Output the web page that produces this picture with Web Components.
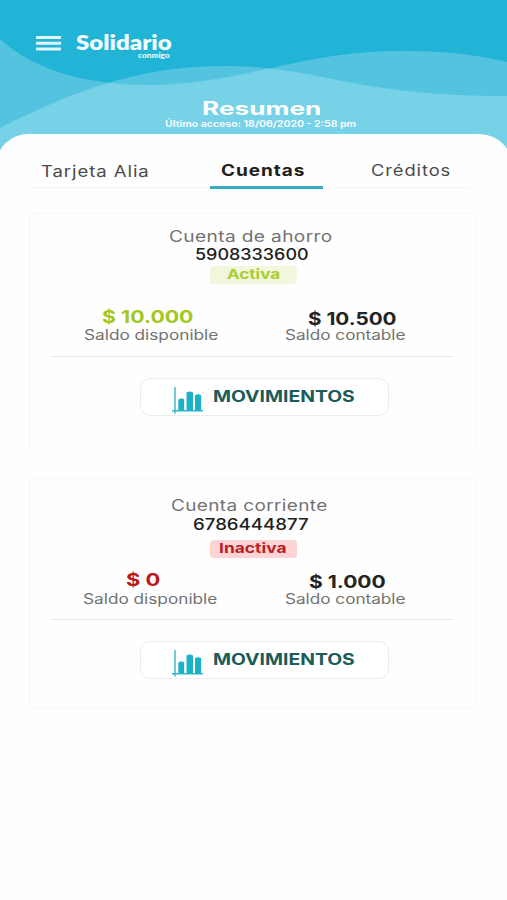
<!DOCTYPE html>
<html lang="es">
<head>
<meta charset="utf-8">
<title>Resumen</title>
<style>
html,body{margin:0;height:100%;background:#fefefe;overflow:hidden}
body{font-family:Inter,"Liberation Sans",sans-serif}
</style>
</head>
<body>
<summary-screen></summary-screen>
<script>
// One line of text set to a given width; the box is exactly the capital height.
class FitText extends HTMLElement{
  connectedCallback(){
    if(this.shadowRoot)return;
    const a=(n,d)=>this.getAttribute(n)||d;
    const w=+a('w',100),size=+a('size',16);
    const r=this.attachShadow({mode:'open'});
    r.innerHTML=`<style>
      :host{display:block;flex:none;width:${w}px;height:${(size*.727).toFixed(2)}px;margin-left:${a('indent',0)}px;margin-top:${a('gap',0)}px;color:${a('color','#727272')};font-size:${size}px;font-weight:${a('weight',400)};line-height:${(size*.727).toFixed(2)}px;letter-spacing:${a('track',0)}px}
      span{display:inline-block;white-space:nowrap;transform-origin:0 50%;vertical-align:top}
    </style><span><slot></slot></span>`;
    const s=r.querySelector('span');
    s.style.transform=`translateY(${a('drop',.6)}px) scaleX(${w/s.offsetWidth})`;
  }
}

class MenuIcon extends HTMLElement{
  constructor(){super();this.attachShadow({mode:'open'}).innerHTML=`<style>:host{display:block;width:25px;height:15px}svg{display:block}</style>
  <svg width="25" height="15" fill="#dff6fb"><path d="M0 0h25v3H0zM0 5.8h25v2.9H0zM0 11.6h25v3H0z"/></svg>`}
}

class BrandLogo extends HTMLElement{
  constructor(){super();this.attachShadow({mode:'open'}).innerHTML=`<style>
  :host{display:flex;flex-direction:column;width:96px;font-family:Lato,sans-serif}</style>
  <fit-text w="96" size="20.3" weight="800" drop=".2" color="#effbfd">Solidario</fit-text>
  <fit-text w="32" size="7" weight="900" indent="62" gap="1.6" color="#effbfd">conmigo</fit-text>`}
}

class WaveHeader extends HTMLElement{
  constructor(){super();this.attachShadow({mode:'open'}).innerHTML=`<style>
  :host{display:grid;height:165px;background:#22b4d7}
  svg,.c{grid-area:1/1}
  svg{display:block}
  .c{display:flex;flex-direction:column}
  .bar{display:flex;gap:15.5px;padding:36px 0 0 35.5px;height:66px;box-sizing:border-box;align-items:flex-start}
  brand-logo{margin-top:-.6px}
  </style>
  <svg width="507" height="165" viewBox="0 0 507 165">
    <path fill="#54c3e0" d="M0 39C36 72 90 85 150 85C240 85 300 51 400 51C440 51 475 54 507 62V165H0Z"/>
    <path fill="#54c3e0" d="M0 128C75 90 140 66 225 66C320 66 350 96 507 96V165H0Z"/>
    <clipPath id="k"><path d="M0 39C36 72 90 85 150 85C240 85 300 51 400 51C440 51 475 54 507 62V165H0Z"/></clipPath>
    <path clip-path="url(#k)" fill="#77d1e7" d="M0 128C75 90 140 66 225 66C320 66 350 96 507 96V165H0Z"/>
  </svg>
  <div class="c"><div class="bar"><menu-icon></menu-icon><brand-logo></brand-logo></div>
  <fit-text w="119" size="18.5" weight="750" indent="202" gap="36" drop=".2" color="#fff">Resumen</fit-text>
  <fit-text w="191" size="8.6" weight="650" indent="165" gap="6" drop=".2" color="#f4fcfe">Último acceso: 18/06/2020 - 2:58 pm</fit-text></div>`}
}

class TabBar extends HTMLElement{
  constructor(){super();this.attachShadow({mode:'open'}).innerHTML=`<style>
  :host{display:grid;grid-template-columns:178px 113px 12px 135px;margin-left:32px;height:55px}
  div{box-sizing:border-box;padding-top:30px;border-bottom:1px solid #f3f4f4;height:54px}
  .on{height:55px;border-bottom:3px solid #39abc0}
  .gap{border:0}
  </style>
  <div><fit-text w="109" size="15.8" indent="8.5" gap=".6" track=".8" color="#4b4b4b">Tarjeta Alia</fit-text></div>
  <div class="on"><fit-text w="84" size="15.8" weight="700" indent="10.5" track=".8" color="#202020">Cuentas</fit-text></div>
  <div class="gap"></div>
  <div><fit-text w="80" size="15.8" indent="36" track=".8" color="#4b4b4b">Créditos</fit-text></div>`}
}

class StatusBadge extends HTMLElement{
  constructor(){super();this.attachShadow({mode:'open'}).innerHTML=`<style>
  :host{display:block;box-sizing:border-box;width:87.5px;height:18px;padding-top:3.5px;border-radius:4px;margin-left:180px;background:#f0f7dc}
  :host([off]){background:#fcd4d6}
  </style><slot></slot>`}
}

class MovesButton extends HTMLElement{
  constructor(){super();this.attachShadow({mode:'open'}).innerHTML=`<style>
  :host{display:flex;box-sizing:border-box;width:249px;height:38px;border:1.5px solid #ececec;border-radius:10px;margin-left:110px;padding:8px 0 0 30px;background:#fff}
  svg{display:block;flex:none}
  </style>
  <svg width="33" height="28" viewBox="0 0 33 28">
    <path d="M4 0V26.5M1 23.7H32" stroke="#36b5c5" stroke-width="1.4" fill="none"/>
    <path d="M7.3 23.7V13Q7.3 11.6 10.2 11.6Q13.2 11.6 13.2 13V23.7ZM15.5 23.7V6Q15.5 4.4 18.7 4.4Q22 4.4 22 6V23.7ZM24 23.7V8.8Q24 7.2 27.1 7.2Q30.2 7.2 30.2 8.8V23.7Z" fill="#1bb1c7"/>
  </svg>
  <fit-text w="141.5" size="15.3" weight="700" indent="9" gap="3.6" drop=".1" color="#1b5b58">MOVIMIENTOS</fit-text>`}
}

class AccountCard extends HTMLElement{
  constructor(){super();this.attachShadow({mode:'open'}).innerHTML=`<style>
  :host{display:flex;flex-direction:column;align-items:flex-start;box-sizing:border-box;width:447px;border:1px solid #f6f6f6;border-radius:5px;margin-left:28.5px}
  :host([open]){border-bottom:0;border-radius:5px 5px 0 0}
  .bal{display:grid;grid-template-columns:230px 1fr;width:100%}
  hr{width:402px;height:0;border:0;border-top:1.5px solid #eaeaea;margin:0 0 0 21.5px}
  </style>
  <slot name="head"></slot>
  <div class="bal"><slot name="available"></slot><slot name="booked"></slot></div>
  <hr><slot name="action"></slot>`}
}

class SummaryScreen extends HTMLElement{
  constructor(){super();this.attachShadow({mode:'open'}).innerHTML=`<style>
  :host{display:block;width:507px;height:900px;overflow:hidden;background:#fefefe}
  main{background:#fefefe;height:766px;margin:-31px -6px 0 -4px;padding:0 6px 0 4px;border-radius:32px 34px 0 0;position:relative}
  .a{height:237px;margin-top:24px}
  .b{height:230px;margin-top:28px}
  [slot=available]{padding-bottom:16px}
  </style>
  <wave-header></wave-header>
  <main>
    <tab-bar></tab-bar>
    <account-card class="a" open>
      <fit-text slot="head" w="163" size="15.6" indent="139.5" gap="16.5" drop="-.2" track=".3">Cuenta de ahorro</fit-text>
      <fit-text slot="head" w="114" size="15.6" weight="500" indent="165" gap="7" drop=".1" color="#202020">5908333600</fit-text>
      <status-badge slot="head" style="margin-top:6px"><fit-text w="53" size="13.5" weight="700" indent="17.5" drop="-.2" color="#a9cd31">Activa</fit-text></status-badge>
      <div slot="available"><fit-text w="91" size="17.8" weight="700" indent="72.5" gap="25.8" color="#a3c81d">$ 10.000</fit-text><fit-text w="134" size="14" indent="54.5" gap="7" drop="-.2">Saldo disponible</fit-text></div>
      <div slot="booked"><fit-text w="89" size="17.2" weight="700" indent="48.5" gap="28" color="#242424">$ 10.500</fit-text><fit-text w="120.5" size="13.8" indent="25.5" gap="5.4" drop="-.2">Saldo contable</fit-text></div>
      <moves-button slot="action" style="margin-top:21px"></moves-button>
    </account-card>
    <account-card class="b">
      <fit-text slot="head" w="157" size="15.6" indent="141.5" gap="20.5" drop="-.2" track=".3">Cuenta corriente</fit-text>
      <fit-text slot="head" w="116" size="15.6" weight="500" indent="163.5" gap="7" color="#202020">6786444877</fit-text>
      <status-badge slot="head" off style="margin-top:10.5px"><fit-text w="67" size="13.5" weight="700" indent="9.5" color="#b91e24">Inactiva</fit-text></status-badge>
      <div slot="available"><fit-text w="34.5" size="17.8" weight="700" indent="96.5" gap="15.2" color="#bd1719">$ 0</fit-text><fit-text w="134" size="14" indent="53.5" gap="7.2">Saldo disponible</fit-text></div>
      <div slot="booked"><fit-text w="77" size="17.2" weight="700" indent="49.5" gap="17.8" drop="1" color="#242424">$ 1.000</fit-text><fit-text w="120.5" size="13.8" indent="25.5" gap="5.3">Saldo contable</fit-text></div>
      <moves-button slot="action" style="margin-top:21px"></moves-button>
    </account-card>
  </main>`;
  }
}
for(const [n,c] of Object.entries({'fit-text':FitText,'menu-icon':MenuIcon,'brand-logo':BrandLogo,'wave-header':WaveHeader,'tab-bar':TabBar,'status-badge':StatusBadge,'moves-button':MovesButton,'account-card':AccountCard,'summary-screen':SummaryScreen}))customElements.define(n,c);
</script>
</body>
</html>
